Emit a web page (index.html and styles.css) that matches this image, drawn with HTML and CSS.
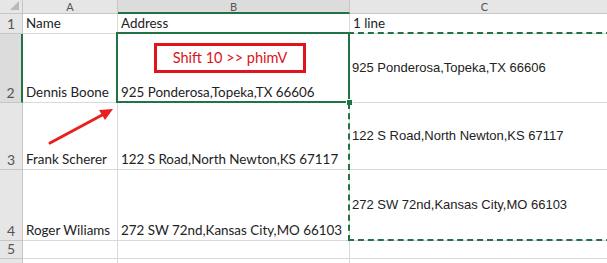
FILE: index.html
```html
<!DOCTYPE html>
<html lang="en">
<head>
    <meta charset="UTF-8">
    <meta name="viewport" content="width=device-width, initial-scale=1.0">
    <title>Addresses</title>
    <link rel="stylesheet" href="styles.css">
</head>
<body>
    <div id="sheet">
        <div class="grid">
            <div class="hd corner"><span class="tri"></span></div>
            <div class="hd col">A</div>
            <div class="hd col col-active">B</div>
            <div class="hd col">C</div>

            <div class="hd row">1</div>
            <div class="cell">Name</div>
            <div class="cell">Address</div>
            <div class="cell">1 line</div>

            <div class="hd row row-active">2</div>
            <div class="cell">Dennis Boone</div>
            <div class="cell">925 Ponderosa,Topeka,TX 66606</div>
            <div class="cell mid">925 Ponderosa,Topeka,TX 66606</div>

            <div class="hd row">3</div>
            <div class="cell">Frank Scherer</div>
            <div class="cell">122 S Road,North Newton,KS 67117</div>
            <div class="cell mid">122 S Road,North Newton,KS 67117</div>

            <div class="hd row">4</div>
            <div class="cell">Roger Wiliams</div>
            <div class="cell">272 SW 72nd,Kansas City,MO 66103</div>
            <div class="cell mid">272 SW 72nd,Kansas City,MO 66103</div>

            <div class="hd row">5</div>
            <div class="cell"></div>
            <div class="cell"></div>
            <div class="cell"></div>

            <div class="hd row"></div>
            <div class="cell"></div>
            <div class="cell"></div>
            <div class="cell"></div>
        </div>

        <!-- active cell B2 and the copied range C2:C4 -->
        <div class="active-cell"></div>
        <div class="copy-range"></div>

        <div class="note">Shift 10 &gt;&gt; phimV</div>
        <svg class="arrow" width="607" height="263" viewBox="0 0 607 263">
            <line x1="50" y1="143" x2="104" y2="114" stroke="#e8201f" stroke-width="3" stroke-linecap="round"/>
            <polygon points="113,109 99,110 105,120" fill="#e8201f"/>
        </svg>
    </div>
</body>
</html>
```

FILE: styles.css
```css
body {
    margin: 0;
    background: #fff;
    font-family: Lato, "Open Sans", sans-serif;
    color: #222;
    overflow: hidden;
}

#sheet {
    position: relative;
    width: 607px;
    height: 263px;
    overflow: hidden;
}

.grid {
    display: grid;
    grid-template-columns: 23px 95px 232px 270px;
    grid-template-rows: 14px 20px 69px 67px 71px 18px 20px;
}

.hd {
    background: #e6e6e6;
    color: #555;
    font-size: 14px;
    border-right: 1px solid #c6c6c6;
    border-bottom: 1px solid #c6c6c6;
    box-sizing: border-box;
}

.corner {
    position: relative;
}

.corner .tri {
    position: absolute;
    right: 3px;
    bottom: 3px;
    width: 0;
    height: 0;
    border-left: 9px solid transparent;
    border-bottom: 9px solid #b9b9b9;
}

.col {
    text-align: center;
    font-size: 11px;
    line-height: 13px;
}

.col-active {
    border-bottom: 2px solid #217346;
    background: #dcdcdc;
}

.row {
    display: flex;
    align-items: flex-end;
    justify-content: center;
    padding-bottom: 1px;
    line-height: 16px;
}

.row-active {
    border-right: 2px solid #217346;
    background: #dcdcdc;
}

.cell {
    border-right: 1px solid #d9d9d9;
    border-bottom: 1px solid #d9d9d9;
    box-sizing: border-box;
    font-size: 13.4px;
    line-height: 17px;
    padding: 0 3px 1px;
    display: flex;
    align-items: flex-end;
    white-space: nowrap;
}

.cell.mid {
    align-items: center;
    font-family: "Liberation Sans", Arial, sans-serif;
    font-size: 13px;
    padding-left: 2px;
}

.active-cell {
    position: absolute;
    left: 116px;
    top: 32px;
    width: 230px;
    height: 67px;
    border: 2px solid #217346;
}

.active-cell::after {
    content: "";
    position: absolute;
    right: -5px;
    bottom: -5px;
    width: 5px;
    height: 5px;
    background: #217346;
    border: 1px solid #fff;
}

.copy-range {
    position: absolute;
    left: 348px;
    top: 32px;
    width: 280px;
    height: 205px;
    border: 2px dashed #217346;
}

.note {
    position: absolute;
    left: 154px;
    top: 43px;
    width: 146px;
    height: 24px;
    border: 3px solid #e0141b;
    background: #fff;
    color: #d9141b;
    font-size: 14.5px;
    line-height: 24px;
    text-align: center;
}

.arrow {
    position: absolute;
    left: 0;
    top: 0;
    pointer-events: none;
}
```
